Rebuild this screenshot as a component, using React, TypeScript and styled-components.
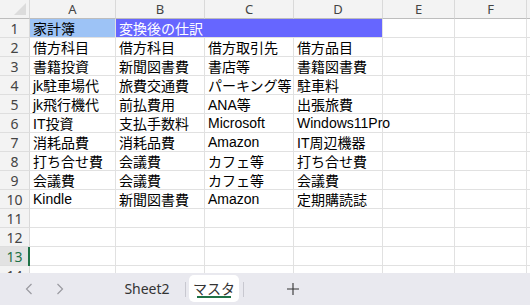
import React from 'react';
import styled, { createGlobalStyle } from 'styled-components';

const GlobalStyle = createGlobalStyle`
  html, body {
    margin: 0;
    padding: 0;
    background: #ffffff;
  }
  body {
    font-family: "Liberation Sans", "Noto Sans CJK JP", sans-serif;
  }
`;

const Wrapper = styled.div`
  width: 530px;
  height: 305px;
  display: flex;
  flex-direction: column;
  overflow: hidden;
  background: #ffffff;
`;

const GridArea = styled.div`
  height: 273px;
  overflow: hidden;
  display: grid;
  grid-template-columns: 30px 86px 89px 89px 89px 72px 72px 1fr;
  grid-auto-rows: 19px;
  align-content: start;
`;

const Corner = styled.div`
  position: relative;
  background: #f3f3f3;
  border-right: 1px solid #d9d9d9;
  border-bottom: 1px solid #bdbdbd;
  box-sizing: border-box;
  &::after {
    content: '';
    position: absolute;
    right: 3px;
    bottom: 3px;
    width: 0;
    height: 0;
    border-left: 12px solid transparent;
    border-bottom: 12px solid #dcdcdc;
  }
`;

const ColHeader = styled.div`
  background: #f3f3f3;
  border-right: 1px solid #d9d9d9;
  border-bottom: 1px solid #bdbdbd;
  box-sizing: border-box;
  display: flex;
  align-items: center;
  justify-content: center;
  font-family: "Noto Sans", sans-serif;
  font-size: 13px;
  color: #444;
`;

const RowHeader = styled.div<{ $active?: boolean }>`
  position: relative;
  background: ${(p) => (p.$active ? '#e2e2e2' : '#f3f3f3')};
  border-right: 1px solid #d9d9d9;
  border-bottom: 1px solid #dedede;
  box-sizing: border-box;
  display: flex;
  align-items: center;
  justify-content: center;
  font-family: "Noto Sans", sans-serif;
  font-size: 14px;
  color: ${(p) => (p.$active ? '#1e7145' : '#444')};
  &::after {
    content: '';
    display: ${(p) => (p.$active ? 'block' : 'none')};
    position: absolute;
    right: -1px;
    top: 0;
    bottom: -1px;
    width: 2px;
    background: #1e7145;
  }
`;

const Cell = styled.div<{ $fill?: string; $color?: string; $span?: number; $spill?: boolean }>`
  grid-column: span ${(p) => p.$span ?? 1};
  position: relative;
  z-index: ${(p) => (p.$spill ? 1 : 0)};
  background: ${(p) => p.$fill ?? '#ffffff'};
  color: ${(p) => p.$color ?? '#000'};
  border-right: 1px solid #e1e1e1;
  border-bottom: 1px solid #e1e1e1;
  box-sizing: border-box;
  display: flex;
  align-items: center;
  padding-left: 3px;
  font-size: 14px;
  white-space: nowrap;
  overflow: ${(p) => (p.$spill ? 'visible' : 'hidden')};
`;

const TabBar = styled.div`
  flex: 1;
  background: #e9e9ef;
  display: flex;
  align-items: center;
`;

const Arrow = styled.div<{ $left: number }>`
  width: 20px;
  display: flex;
  justify-content: center;
  margin-left: ${(p) => p.$left}px;
`;

const Tab = styled.div<{ $active?: boolean; $width: number; $left?: number }>`
  position: relative;
  width: ${(p) => p.$width}px;
  height: 27px;
  margin-top: -2px;
  margin-left: ${(p) => p.$left ?? 0}px;
  display: flex;
  align-items: center;
  justify-content: center;
  font-size: 14px;
  color: #333;
  background: ${(p) => (p.$active ? '#ffffff' : 'transparent')};
  border-radius: 5px;
  font-family: ${(p) => (p.$active ? '"Noto Sans CJK JP", sans-serif' : '"Noto Sans", sans-serif')};
  &::after {
    content: '';
    display: ${(p) => (p.$active ? 'block' : 'none')};
    position: absolute;
    left: 8px;
    right: 8px;
    bottom: 4px;
    height: 2px;
    background: #1e7145;
  }
`;

const Separator = styled.div<{ $gap: number }>`
  width: 1px;
  height: 15px;
  background: #c8c8d0;
  margin: 0 ${(p) => p.$gap}px;
`;

const PlusButton = styled.div`
  margin-left: 39px;
  display: flex;
  align-items: center;
`;

const cols = ['A', 'B', 'C', 'D', 'E', 'F', ''];

const data: string[][] = [
  ['借方科目', '借方科目', '借方取引先', '借方品目'],
  ['書籍投資', '新聞図書費', '書店等', '書籍図書費'],
  ['jk駐車場代', '旅費交通費', 'パーキング等', '駐車料'],
  ['jk飛行機代', '前払費用', 'ANA等', '出張旅費'],
  ['IT投資', '支払手数料', 'Microsoft', 'Windows11Pro'],
  ['消耗品費', '消耗品費', 'Amazon', 'IT周辺機器'],
  ['打ち合せ費', '会議費', 'カフェ等', '打ち合せ費'],
  ['会議費', '会議費', 'カフェ等', '会議費'],
  ['Kindle', '新聞図書費', 'Amazon', '定期購読誌'],
];

const Chevron: React.FC<{ dir: 'left' | 'right' }> = ({ dir }) => (
  <svg width="8" height="12" viewBox="0 0 8 12">
    <path
      d={dir === 'left' ? 'M6.5 1 L1.5 6 L6.5 11' : 'M1.5 1 L6.5 6 L1.5 11'}
      fill="none"
      stroke="#9a9aa0"
      strokeWidth="1.2"
    />
  </svg>
);

const App: React.FC = () => {
  const rows: React.ReactNode[] = [];

  rows.push(
    <React.Fragment key="r1">
      <RowHeader>1</RowHeader>
      <Cell $fill="#9dc3f6">家計簿</Cell>
      <Cell $fill="#6666ff" $color="#ffffff" $span={3}>
        変換後の仕訳
      </Cell>
      <Cell />
      <Cell />
      <Cell />
    </React.Fragment>
  );

  for (let r = 2; r <= 14; r++) {
    const values = data[r - 2] ?? [];
    rows.push(
      <React.Fragment key={`r${r}`}>
        <RowHeader $active={r === 13}>{r}</RowHeader>
        {cols.map((_, c) => (
          <Cell key={c} $spill={!!values[c] && !values[c + 1]}>
            {values[c] ?? ''}
          </Cell>
        ))}
      </React.Fragment>
    );
  }

  return (
    <>
      <GlobalStyle />
      <Wrapper>
        <GridArea>
          <Corner />
          {cols.map((c, i) => (
            <ColHeader key={i}>{c}</ColHeader>
          ))}
          {rows}
        </GridArea>
        <TabBar>
          <Arrow $left={19}>
            <Chevron dir="left" />
          </Arrow>
          <Arrow $left={11}>
            <Chevron dir="right" />
          </Arrow>
          <Tab $width={70} $left={42}>
            Sheet2
          </Tab>
          <Separator $gap={3} />
          <Tab $width={50} $active>
            マスタ
          </Tab>
          <Separator $gap={4} />
          <PlusButton>
            <svg width="12" height="12" viewBox="0 0 12 12">
              <path d="M6 0 V12 M0 6 H12" stroke="#333" strokeWidth="1.1" />
            </svg>
          </PlusButton>
        </TabBar>
      </Wrapper>
    </>
  );
};

export default App;
